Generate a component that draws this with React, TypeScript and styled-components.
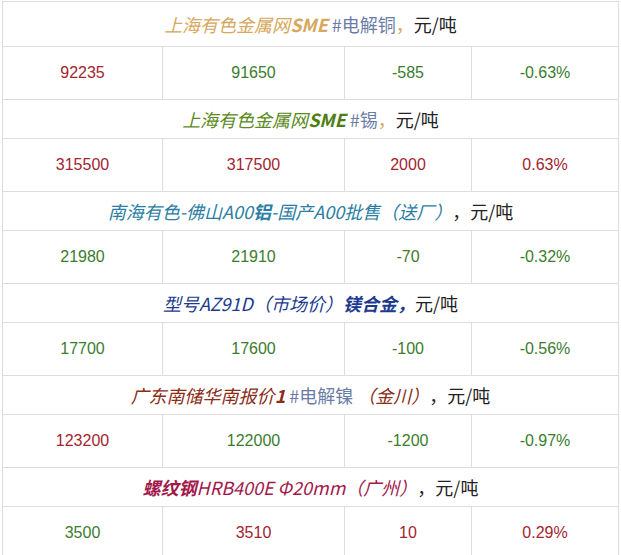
import React, { FC } from 'react'
import styled, { createGlobalStyle } from 'styled-components'

const GlobalStyle = createGlobalStyle`
    html, body { margin: 0; padding: 0; background: #fff; }
    body { font-family: "Noto Sans CJK SC", "Noto Sans", sans-serif; }
`

const RED = '#a3252f'
const GREEN = '#3a7d2c'
const TAG = '#6a7ca6'
const INK = '#222'

type Part = { text: string; color: string; italic?: boolean; bold?: boolean }

interface Block {
    title: Part[];
    first?: boolean;
    values: { text: string; up: boolean }[];
}

const tag = (text: string): Part => ({ text, color: TAG })
const ink = (text: string): Part => ({ text, color: INK })

const blocks: Block[] = [
    {
        first: true,
        title: [
            { text: '上海有色金属网', color: '#d6a75c', italic: true },
            { text: 'SME', color: '#d6a75c', italic: true, bold: true },
            tag(' #电解铜'),
            { text: '，', color: '#d6a75c' },
            ink('元/吨'),
        ],
        values: [
            { text: '92235', up: true },
            { text: '91650', up: false },
            { text: '-585', up: false },
            { text: '-0.63%', up: false },
        ],
    },
    {
        title: [
            { text: '上海有色金属网', color: '#5b8a1c', italic: true },
            { text: 'SME', color: '#4f7d12', italic: true, bold: true },
            tag(' #锡'),
            { text: '，', color: '#d6a75c' },
            ink('元/吨'),
        ],
        values: [
            { text: '315500', up: true },
            { text: '317500', up: true },
            { text: '2000', up: true },
            { text: '0.63%', up: true },
        ],
    },
    {
        title: [
            { text: '南海有色-佛山A00', color: '#2b7ea3', italic: true },
            { text: '铝', color: '#2b7ea3', italic: true, bold: true },
            { text: '-国产A00批售（送厂）', color: '#2b7ea3', italic: true },
            ink('，元/吨'),
        ],
        values: [
            { text: '21980', up: false },
            { text: '21910', up: false },
            { text: '-70', up: false },
            { text: '-0.32%', up: false },
        ],
    },
    {
        title: [
            { text: '型号AZ91D（市场价）', color: '#1d3b8e', italic: true },
            { text: '镁合金，', color: '#1d3b8e', italic: true, bold: true },
            ink('元/吨'),
        ],
        values: [
            { text: '17700', up: false },
            { text: '17600', up: false },
            { text: '-100', up: false },
            { text: '-0.56%', up: false },
        ],
    },
    {
        title: [
            { text: '广东南储华南报价', color: '#8a2c16', italic: true },
            { text: '1', color: '#8a2c16', italic: true, bold: true },
            tag(' #电解镍 '),
            { text: '（金川）', color: '#8a2c16', italic: true },
            ink('，元/吨'),
        ],
        values: [
            { text: '123200', up: true },
            { text: '122000', up: false },
            { text: '-1200', up: false },
            { text: '-0.97%', up: false },
        ],
    },
    {
        title: [
            { text: '螺纹钢', color: '#a11a4b', italic: true, bold: true },
            { text: 'HRB400E Φ20mm（广州）', color: '#a11a4b', italic: true },
            ink('，元/吨'),
        ],
        values: [
            { text: '3500', up: false },
            { text: '3510', up: true },
            { text: '10', up: true },
            { text: '0.29%', up: true },
        ],
    },
]

const TableStyle = styled.div`
    margin: 1px 0 0 2px;
    width: 617px;
    border-top: 1px solid #dddddd;
    border-left: 1px solid #dddddd;
    box-sizing: border-box;
    display: grid;
    grid-template-columns: 160px 182px 127px 147px;
`

const TitleCell = styled.div<{ $first?: boolean }>`
    grid-column: 1 / -1;
    height: ${(p) => (p.$first ? 44 : 38)}px;
    border-right: 1px solid #dddddd;
    border-bottom: 1px solid #dddddd;
    display: flex;
    align-items: center;
    justify-content: center;
    font-size: 18px;
    white-space: pre;
`

const TitlePart = styled.span<{ $color: string; $italic?: boolean; $bold?: boolean }>`
    color: ${(p) => p.$color};
    font-style: ${(p) => (p.$italic ? 'italic' : 'normal')};
    font-weight: ${(p) => (p.$bold ? 700 : 400)};
`

const ValueCell = styled.div<{ $up: boolean }>`
    height: 52px;
    border-right: 1px solid #dddddd;
    border-bottom: 1px solid #dddddd;
    display: flex;
    align-items: center;
    justify-content: center;
    font-family: "Liberation Sans", "Noto Sans", sans-serif;
    font-size: 16px;
    color: ${(p) => (p.$up ? RED : GREEN)};
`

const App: FC = () => (
    <>
        <GlobalStyle />
        <TableStyle>
            {blocks.map((block, i) => (
                <React.Fragment key={i}>
                    <TitleCell $first={block.first}>
                        {block.title.map((part, k) => (
                            <TitlePart key={k} $color={part.color} $italic={part.italic} $bold={part.bold}>
                                {part.text}
                            </TitlePart>
                        ))}
                    </TitleCell>
                    {block.values.map((v, k) => (
                        <ValueCell key={k} $up={v.up}>{v.text}</ValueCell>
                    ))}
                </React.Fragment>
            ))}
        </TableStyle>
    </>
)

export default App
